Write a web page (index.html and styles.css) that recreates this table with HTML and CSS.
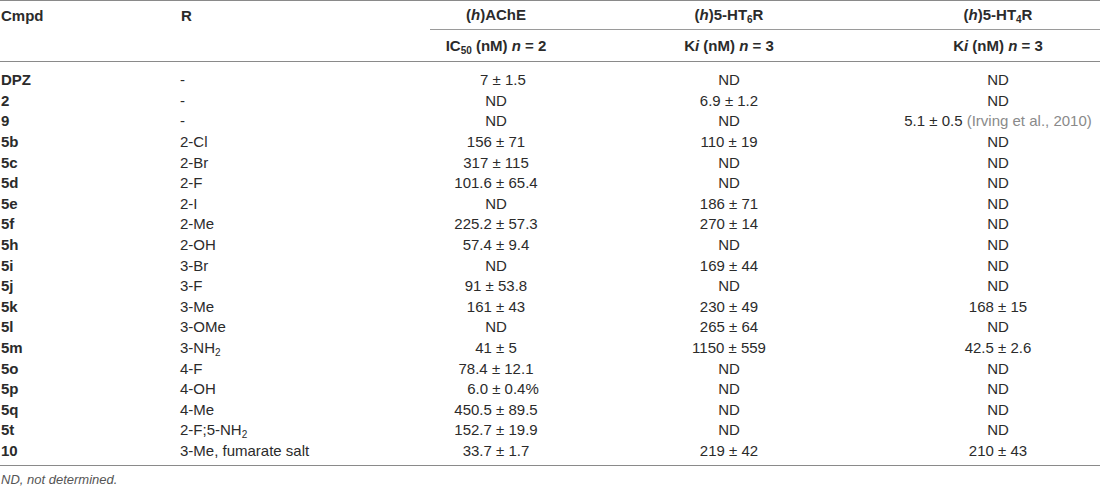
FILE: index.html
```html
<!DOCTYPE html>
<html lang="en">
<head>
    <meta charset="UTF-8">
    <title>Inhibition data</title>
    <link rel="stylesheet" href="styles.css">
</head>
<body>
    <table class="data">
        <colgroup>
            <col class="c-cmpd">
            <col class="c-r">
            <col class="c-ache">
            <col class="c-ht6">
            <col class="c-ht4">
        </colgroup>
        <thead>
            <tr class="head-top">
                <th rowspan="2" class="left">Cmpd</th>
                <th rowspan="2" class="left">R</th>
                <th class="split">(<i>h</i>)AChE</th>
                <th class="split">(<i>h</i>)5-HT<sub>6</sub>R</th>
                <th class="split">(<i>h</i>)5-HT<sub>4</sub>R</th>
            </tr>
            <tr class="head-sub">
                <th>IC<sub>50</sub> (nM) <i>n</i> = 2</th>
                <th>K<i>i</i> (nM) <i>n</i> = 3</th>
                <th>K<i>i</i> (nM) <i>n</i> = 3</th>
            </tr>
        </thead>
        <tbody>
            <tr><td class="id">DPZ</td><td>-</td><td><span class="pad">7 ± 1.5</span></td><td>ND</td><td>ND</td></tr>
            <tr><td class="id">2</td><td>-</td><td>ND</td><td>6.9 ± 1.2</td><td>ND</td></tr>
            <tr><td class="id">9</td><td>-</td><td>ND</td><td>ND</td><td>5.1 ± 0.5 <span class="ref">(Irving et al., 2010)</span></td></tr>
            <tr><td class="id">5b</td><td>2-Cl</td><td>156 ± 71</td><td>110 ± 19</td><td>ND</td></tr>
            <tr><td class="id">5c</td><td>2-Br</td><td>317 ± 115</td><td>ND</td><td>ND</td></tr>
            <tr><td class="id">5d</td><td>2-F</td><td>101.6 ± 65.4</td><td>ND</td><td>ND</td></tr>
            <tr><td class="id">5e</td><td>2-I</td><td>ND</td><td>186 ± 71</td><td>ND</td></tr>
            <tr><td class="id">5f</td><td>2-Me</td><td>225.2 ± 57.3</td><td>270 ± 14</td><td>ND</td></tr>
            <tr><td class="id">5h</td><td>2-OH</td><td>57.4 ± 9.4</td><td>ND</td><td>ND</td></tr>
            <tr><td class="id">5i</td><td>3-Br</td><td>ND</td><td>169 ± 44</td><td>ND</td></tr>
            <tr><td class="id">5j</td><td>3-F</td><td>91 ± 53.8</td><td>ND</td><td>ND</td></tr>
            <tr><td class="id">5k</td><td>3-Me</td><td>161 ± 43</td><td>230 ± 49</td><td>168 ± 15</td></tr>
            <tr><td class="id">5l</td><td>3-OMe</td><td>ND</td><td>265 ± 64</td><td>ND</td></tr>
            <tr><td class="id">5m</td><td>3-NH<sub>2</sub></td><td>41 ± 5</td><td>1150 ± 559</td><td>42.5 ± 2.6</td></tr>
            <tr><td class="id">5o</td><td>4-F</td><td>78.4 ± 12.1</td><td>ND</td><td>ND</td></tr>
            <tr><td class="id">5p</td><td>4-OH</td><td><span class="pad">6.0 ± 0.4%</span></td><td>ND</td><td>ND</td></tr>
            <tr><td class="id">5q</td><td>4-Me</td><td>450.5 ± 89.5</td><td>ND</td><td>ND</td></tr>
            <tr><td class="id">5t</td><td>2-F;5-NH<sub>2</sub></td><td>152.7 ± 19.9</td><td>ND</td><td>ND</td></tr>
            <tr><td class="id">10</td><td>3-Me, fumarate salt</td><td>33.7 ± 1.7</td><td>219 ± 42</td><td>210 ± 43</td></tr>
        </tbody>
    </table>
    <p class="note">ND, not determined.</p>
</body>
</html>
```

FILE: styles.css
```css
body {
    margin: 0;
    background: #fff;
    color: #2b2b2b;
    font-family: "Liberation Sans", Arial, sans-serif;
    font-size: 15px;
}
.data {
    width: 1100px;
    border-collapse: collapse;
    table-layout: fixed;
    border-top: 1px solid #8a8a8a;
    border-bottom: 1px solid #8a8a8a;
}
.c-cmpd { width: 180px; }
.c-r { width: 250px; }
.c-ache { width: 132px; }
.c-ht6 { width: 334px; }
.c-ht4 { width: 204px; }

th {
    font-weight: bold;
    text-align: center;
    padding: 0;
    line-height: 18px;
}
th.left {
    text-align: left;
    vertical-align: top;
    padding: 6px 0 0 1px;
}
.head-top th.split {
    height: 28px;
    border-bottom: 1px solid #9a9a9a;
}
.head-sub th {
    height: 31px;
}
thead {
    border-bottom: 1px solid #8a8a8a;
}
td {
    padding: 0;
    height: 20.6px;
    line-height: 18px;
    text-align: center;
    white-space: nowrap;
}
td:nth-child(2) {
    text-align: left;
}
td.id {
    font-weight: bold;
    text-align: left;
    padding-left: 1px;
}
tbody tr:first-child td {
    padding-top: 8px;
}
tbody tr:last-child td {
    padding-bottom: 4px;
}
sub {
    font-size: 10px;
    line-height: 0;
    vertical-align: -3px;
}
.pad {
    padding-left: 14px;
}
.ref {
    color: #8a8a8a;
}
.note {
    margin: 6px 0 0 1px;
    font-size: 13px;
    font-style: italic;
    color: #555;
}
```
